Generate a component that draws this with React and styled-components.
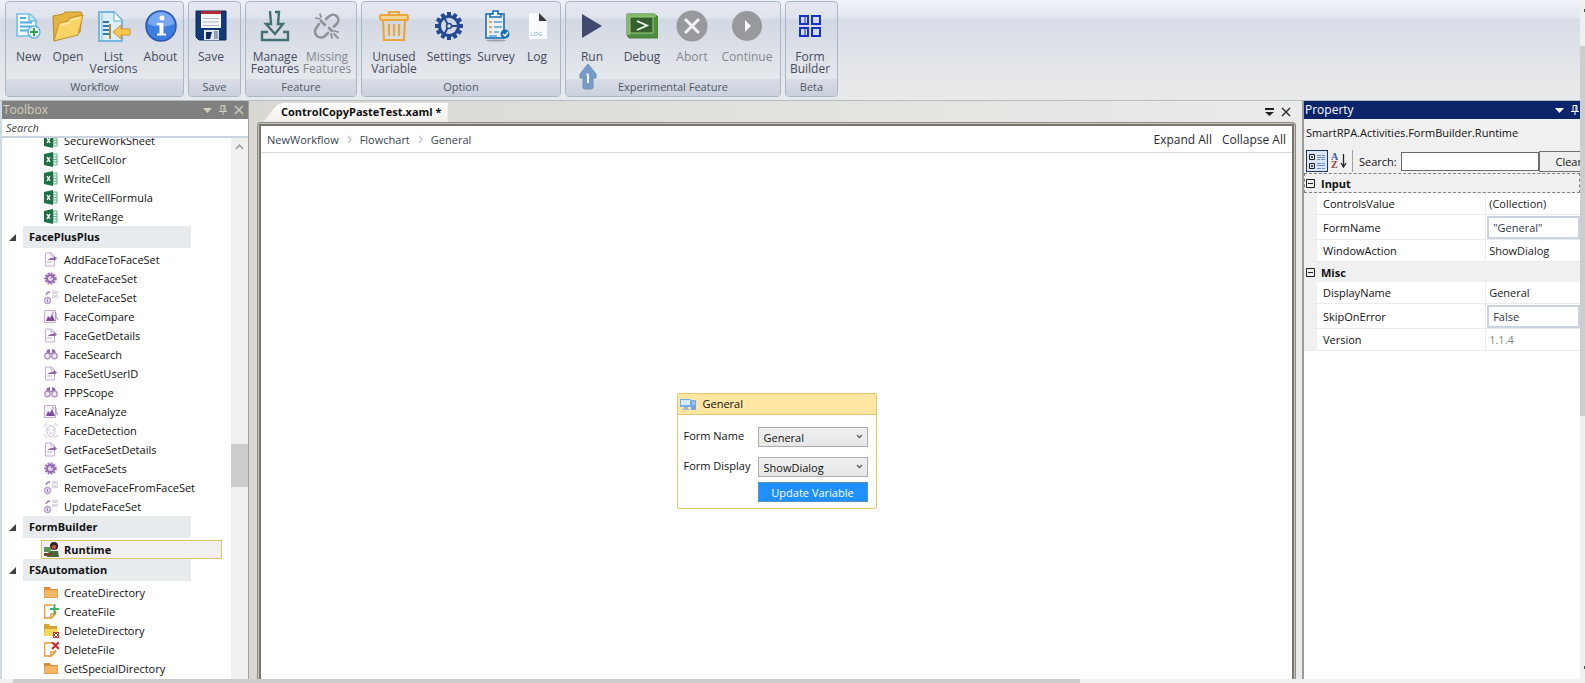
import React from 'react'
import styled, { createGlobalStyle, css } from 'styled-components'

const GlobalStyle = createGlobalStyle`
  * {
    box-sizing: border-box;
  }
  html, body, #root {
    height: 100%;
    margin: 0;
  }
  body, button, input, select {
    font-family: 'Open Sans', 'Noto Sans', sans-serif;
    font-size: 11px;
  }
`

const Window = styled.div`
  height: 100vh;
  display: flex;
  overflow: hidden;
  background: #e4e7ed;
  color: #111;
`

const Desktop = styled.div`
  flex: 1;
  min-width: 0;
  display: flex;
  flex-direction: column;
`

const EdgeTrack = styled.div`
  width: 5px;
  display: flex;
  flex-direction: column;
  align-items: flex-end;
  padding: 9px 0 14px;
  background: #f0f0f0;
`

const EdgeMark = styled.div`
  width: 1px;
  height: 3px;
  background: #505050;
`

const EdgeThumb = styled.div`
  width: 5px;
  height: 370px;
  margin: 34px 0 auto;
  background: #cdcdcd;
`

const BottomTrack = styled.div`
  height: 4px;
  padding: 0 500px 0 13px;
  background: #f0f0f0;
`

const BottomThumb = styled.div`
  height: 4px;
  background: #cdcdcd;
`

/* ribbon */

const Ribbon = styled.header`
  height: 101px;
  flex: none;
  display: flex;
  gap: 4px;
  padding: 1px 5px 3px;
  background: linear-gradient(#f0f3f8 0, #e4e8f0 17%, #d7dce7 19%, #e8e9ea 90%);
  border-bottom: 1px solid #b4bcc6;
`

const Group = styled.section`
  width: ${(p) => p.$w}px;
  display: flex;
  flex-direction: column;
  border: 1px solid #a9b8c8;
  border-radius: 4px;
  overflow: hidden;
  background: linear-gradient(#e6e9f1 0, #dfe3ec 17%, #d2d8e3 19%, #e4e7eb 78%);
`

const GroupTools = styled.div`
  flex: 1;
  display: flex;
  padding: 8px 0 0 4px;
`

const GroupTitle = styled.h2`
  margin: 0;
  height: 17px;
  font-size: 11px;
  font-weight: 400;
  line-height: 15px;
  text-align: center;
  color: #505866;
  background: linear-gradient(#d8dce5, #cbd1dd);
`

const Tool = styled.button`
  position: relative;
  width: ${(p) => p.$w}px;
  flex: none;
  padding: 0;
  border: 0;
  background: none;
  display: flex;
  flex-direction: column;
  align-items: center;
  gap: 9px;
  font-size: 12px;
  line-height: 12px;
  color: #454b5e;

  &:disabled {
    color: #85888f;
  }

  > svg {
    flex: none;
  }
`

const PinArrow = styled.span`
  position: absolute;
  left: 8px;
  top: 53px;
  height: 27px;
`

/* panes */

const Workspace = styled.main`
  flex: 1;
  min-height: 0;
  display: flex;
  background: linear-gradient(90deg, #d6d3cc, #f0f0f0);
`

const Toolbox = styled.aside`
  width: 249px;
  display: flex;
  flex-direction: column;
  border-left: 2px solid #d0d9e4;
  border-right: 1px solid #a0a0a0;
  background: #fff;
`

const PaneTitle = styled.div`
  height: 18px;
  flex: none;
  display: flex;
  align-items: center;
  gap: 7px;
  padding: 0 ${(p) => (p.$active ? 1 : 4)}px 0 1px;
  color: ${(p) => (p.$active ? '#fff' : '#d3cfbb')};
  background: ${(p) => (p.$active ? '#0a246a' : '#808080')};
`

const PaneName = styled.h2`
  flex: 1;
  margin: 0;
  font-size: 12px;
  font-weight: 400;
  line-height: 18px;
`

const IconButton = styled.button`
  padding: 0;
  border: 0;
  background: none;
  color: inherit;
  display: flex;
`

const SearchInput = styled.input`
  height: 19px;
  flex: none;
  border: 0;
  border-bottom: 2px solid #ccd5df;
  padding: 0 4px;
  outline: 0;

  &::placeholder {
    color: #444;
    font-style: italic;
  }
`

const TreeArea = styled.div`
  flex: 1;
  min-height: 0;
  display: flex;
`

const Tree = styled.div`
  flex: 1;
  overflow: hidden;
`

const TreeContent = styled.div`
  margin-top: -7px;
`

const Category = styled.div`
  display: flex;
  align-items: center;
  height: 22px;
  margin-bottom: 2px;
  padding-left: 7px;
  gap: 7px;
`

const CategoryName = styled.h3`
  width: 168px;
  margin: 0;
  padding-left: 6px;
  font-size: 11px;
  line-height: 22px;
  background: #e7ebee;
`

const Item = styled.div`
  display: flex;
  align-items: center;
  gap: 5px;
  height: 19px;
  margin: 0 9px 0 39px;
  padding-left: 2px;
  white-space: nowrap;
  border: 1px solid transparent;

  svg {
    flex: none;
  }

  ${(p) =>
    p.$selected &&
    css`
      font-weight: 700;
      border-color: #dcc56a;
      background: #f1eff0;
    `}
`

const ScrollTrack = styled.div`
  width: 17px;
  flex: none;
  display: flex;
  flex-direction: column;
  align-items: center;
  padding-top: 6px;
  background: #f0f0f0;
`

const ScrollThumb = styled.div`
  width: 17px;
  height: 43px;
  margin-top: 294px;
  background: #cdcdcd;
`

/* document */

const Document = styled.section`
  flex: 1;
  min-width: 0;
  display: flex;
  flex-direction: column;
  margin: 0 6px 0 8px;
`

const TabStrip = styled.div`
  height: 21px;
  display: flex;
  align-items: flex-end;
  padding: 0 5px 0 6px;
`

const Tab = styled.div`
  height: 19px;
  padding: 0 6px 0 18px;
  font-weight: 700;
  line-height: 18px;
  white-space: nowrap;
  background: linear-gradient(#fff, #f1efeb);
  clip-path: polygon(0 100%, 14px 2px, 20px 0, 100% 0, 100% 100%);
`

const TabActions = styled.div`
  margin-left: auto;
  display: flex;
  align-items: center;
  gap: 7px;
  height: 20px;
  color: #222;
`

const Frame = styled.div`
  flex: 1;
  display: flex;
  border: 1px solid #8b8a83;
  border-bottom: 0;
  border-radius: 4px 4px 0 0;
  padding: 1px 1px 0;
  background: #c9c7bf;
`

const Sheet = styled.div`
  flex: 1;
  display: flex;
  flex-direction: column;
  border: 2px solid #77756e;
  border-bottom: 0;
  background: #fff;
`

const Crumbs = styled.nav`
  height: 27px;
  flex: none;
  display: flex;
  align-items: center;
  gap: 7px;
  padding: 0 6px;
  color: #39424e;
  border-bottom: 1px solid #d5dae0;
`

const CrumbLink = styled.a`
  color: inherit;
  text-decoration: none;
`

const CrumbActions = styled.div`
  margin-left: auto;
  display: flex;
  gap: 10px;
`

const TextButton = styled.button`
  padding: 0;
  border: 0;
  background: none;
  font-size: 12px;
  color: #2b2b33;
`

const Canvas = styled.div`
  flex: 1;
  display: flex;
  align-items: center;
  justify-content: center;
`

const Activity = styled.article`
  width: 200px;
  height: 116px;
  margin-top: 70px;
  border: 1px solid #e6c66c;
  border-radius: 2px;
  background: #fff;
`

const ActivityTitle = styled.div`
  height: 21px;
  display: flex;
  align-items: center;
  gap: 6px;
  padding: 0 2px;
  line-height: 18px;
  background: #ffe6a3;
  border-bottom: 1px solid #e6c66c;
`

const ActivityForm = styled.form`
  display: grid;
  grid-template-columns: 74px 110px;
  grid-template-rows: 20px 20px 20px;
  row-gap: 10px;
  padding: 12px 7px 0 6px;
  line-height: 17px;
  white-space: nowrap;
`

const SelectBox = styled.div`
  position: relative;

  svg {
    position: absolute;
    right: 5px;
    top: 7px;
    pointer-events: none;
  }
`

const Select = styled.select`
  appearance: none;
  display: block;
  width: 100%;
  height: 20px;
  padding: 0 5px;
  color: #111;
  border: 1px solid #acacac;
  border-radius: 0;
  background: linear-gradient(#f0f0f0, #e6e6e6);
`

const UpdateButton = styled.button`
  grid-column: 2;
  height: 20px;
  margin-top: -5px;
  padding: 0;
  border: 1px solid #5f8fc0;
  color: #fff;
  background: #1e90ff;
`

/* property grid */

const Property = styled.aside`
  width: 278px;
  display: flex;
  flex-direction: column;
  overflow: hidden;
  border-left: 2px solid #9c9c9c;
  background: #fff;
`

const TypeName = styled.div`
  height: 30px;
  padding: 0 2px;
  line-height: 28px;
  background: #f0f0f0;
`

const PropertyTools = styled.div`
  height: 24px;
  display: flex;
  align-items: center;
  padding-left: 2px;
  white-space: nowrap;
  background: #f0f0f0;

  > * {
    flex: none;
  }
`

const SortButton = styled.button`
  width: 22px;
  height: 22px;
  padding: 0;
  display: flex;
  align-items: center;
  justify-content: center;
  border: 1px solid ${(p) => (p.$on ? '#1d3557' : 'transparent')};
  background: ${(p) => (p.$on ? '#d9e6f7' : 'none')};
`

const Divider = styled.span`
  width: 1px;
  height: 22px;
  margin: 0 6px 0 2px;
  background: #a0a0a0;
`

const PropertySearch = styled.input`
  width: 138px;
  height: 19px;
  margin-left: 4px;
  border: 1px solid #6b6b6b;
`

const ClearButton = styled.button`
  width: 60px;
  height: 21px;
  padding: 0;
  border: 1px solid #707070;
  color: #111;
  background: #eee;
`

const Grid = styled.table`
  width: 100%;
  table-layout: fixed;
  border-collapse: separate;
  border-spacing: 0;
  text-align: left;
  background: #fff;

  th,
  td {
    padding: 0;
    font-weight: 400;
  }
`

const SectionRow = styled.tr`
  height: 20px;
  background: #f0f0f0;
  ${(p) => p.$focused && 'outline: 1px dashed #808080; outline-offset: -1px;'}
`

const SectionHead = styled.div`
  display: flex;
  align-items: center;
  gap: 6px;
  padding-left: 2px;
  font-weight: 700;
  line-height: 19px;
`

const PropertyRow = styled.tr`
  height: ${(p) => (p.$boxed ? 25 : 22)}px;

  th {
    padding-left: 6px;
    border-left: 13px solid #f0f0f0;
    border-right: 1px solid #ececec;
    border-bottom: 1px solid #ececec;
  }

  td {
    padding-left: ${(p) => (p.$boxed ? 1 : 3)}px;
    line-height: 17px;
    border-bottom: 1px solid #ececec;
    color: ${(p) => (p.$muted ? '#858585' : '#222')};
  }
`

const ValueInput = styled.input`
  display: block;
  width: 100%;
  height: 23px;
  padding: 0 4px;
  border: 2px solid #ccd3e0;
  color: #33394f;
`

/* ribbon icons */

const IconNew = () => (
  <svg width="32" height="32" viewBox="0 0 32 32">
    <path d="M4 4h13l6 6v16H4z" fill="#f5fbff" stroke="#72bfe4" strokeWidth="1.6" />
    <path d="M16 4v7h7" fill="#c5e5f6" stroke="#72bfe4" strokeWidth="1.4" />
    <path d="M7 8h6M7 12.500h12M7 16.500h12M7 20.500h8" stroke="#53afe0" strokeWidth="2" />
    <circle cx="21" cy="22" r="6" fill="#eaf7fb" stroke="#5ab3d6" strokeWidth="1.3" />
    <path d="M21 18v8M17 22h8" stroke="#2fa34b" strokeWidth="2" />
  </svg>
)

const IconOpen = () => (
  <svg width="32" height="32" viewBox="0 0 32 32">
    <path d="M1 6l10-2 2-2 16 0 1 2-2 18-26 9z" fill="#e5b440" stroke="#b98a24" />
    <path d="M7 13l9-2 2-3 13-3-5 20L2 31z" fill="#fbd367" stroke="#c1932c" />
    <path d="M9 15l8-2 2-3 9-2" fill="none" stroke="#ffeaa6" strokeWidth="1.5" />
  </svg>
)

const IconVersions = () => (
  <svg width="34" height="32" viewBox="0 0 34 32">
    <path d="M2 2h15l8 8v21H2z" fill="#dceefb" stroke="#58a6dc" strokeWidth="1.5" />
    <path d="M17 2v9h8" fill="#fff" stroke="#58a6dc" />
    <path d="M5 3v27" stroke="#a8d3f1" strokeWidth="2" />
    <path d="M6 12h6M6 16h6M6 20h6M6 24h6" stroke="#2f77b5" strokeWidth="1.8" />
    <path d="M13 14v15" stroke="#c08a1c" strokeWidth="2" />
    <path d="M16 22l8-7v4h9v6h-9v4z" fill="#fbc44d" stroke="#cb942e" />
  </svg>
)

const IconAbout = () => (
  <svg width="32" height="32" viewBox="0 0 32 32">
    <circle cx="16" cy="16" r="15" fill="#3e7de0" stroke="#2a57ac" strokeWidth="1.5" />
    <path d="M3 14a13 12 0 0 1 26 0q-13 6-26 0z" fill="#77a8f3" />
    <circle cx="17" cy="8" r="2.500" fill="#fff" />
    <path d="M12 13h6.500v10.500H21v2h-9v-2h2.500v-8.500H12z" fill="#fff" />
  </svg>
)

const IconSave = () => (
  <svg width="32" height="32" viewBox="0 0 32 32">
    <path d="M1 1h30v29H4l-3-3z" fill="#123a78" stroke="#0b2650" />
    <path d="M6 1h20v4H6z" fill="#b02a34" />
    <path d="M6 4h20v14H6z" fill="#f5f5f7" />
    <path d="M8 8.500h16M8 12h16M8 15.500h16" stroke="#b5b9c4" />
    <path d="M9 20h15v10H9z" fill="#dfe6ef" />
    <path d="M11 22h6l-2 7h-4z" fill="#122a52" />
    <path d="M19 21h4v8h-4z" fill="#92a1b8" />
  </svg>
)

const IconManage = () => (
  <svg width="32" height="32" viewBox="0 0 32 32" fill="none" stroke="#3f7175" strokeWidth="2.400">
    <path d="M11 1l1 13H7l9 10 8-10h-5l1-12h-4" />
    <path d="M9 22H3v8h26v-8h-5" />
  </svg>
)

const IconMissing = () => (
  <svg width="32" height="32" viewBox="0 0 32 32" fill="none" stroke="#8e9197" strokeWidth="2.600" strokeLinecap="round">
    <path d="M15 9l3-2.500a5 5 0 0 1 8 7l-3 3" />
    <path d="M8 14l-2 3a5.500 5.500 0 0 0 8 9l3-3" />
    <path d="M10 11l4 4M18 18l3 3" />
    <path d="M5 8l4 1M9 4l1 3M23 21l4 1M20 24l1 4M23 24l4 4" strokeWidth="1.800" />
  </svg>
)

const IconTrash = () => (
  <svg width="32" height="32" viewBox="0 0 32 32" fill="none" stroke="#eaa63a" strokeWidth="2.200">
    <rect x="2" y="5" width="28" height="5" rx="2" fill="#f4d69a" />
    <path d="M11 5V2h10v3M5 10l1 20h20l1-20" />
    <path d="M11 14v12M16 14v12M21 14v12" />
  </svg>
)

const teeth = [0, 30, 60, 90, 120, 150, 180, 210, 240, 270, 300, 330]

const IconSettings = () => (
  <svg width="32" height="32" viewBox="0 0 32 32" stroke="#234a92" fill="none">
    {teeth.map((a) => (
      <path key={a} d="M16 2v5" strokeWidth="4" transform={`rotate(${a} 16 16)`} />
    ))}
    <circle cx="16" cy="16" r="9.500" strokeWidth="3" />
    <circle cx="16" cy="16" r="2.500" strokeWidth="1.500" fill="#dfe3ec" />
    <path d="M19 16h6M14.500 14l-3-6M14.500 18l-3 6" strokeWidth="2" />
  </svg>
)

const IconSurvey = () => (
  <svg width="32" height="32" viewBox="0 0 32 32">
    <ellipse cx="16" cy="30.500" rx="10" ry="1" fill="#9aa1ad" />
    <rect x="6" y="4" width="18" height="24" fill="#e8f1fa" stroke="#186fb4" strokeWidth="1.600" />
    <path d="M10 4h3V1h5v3h3v3H10z" fill="#fff" stroke="#186fb4" strokeWidth="1.600" />
    <path d="M9 12h3M9 17h3M9 22h3" stroke="#efa24c" strokeWidth="2" />
    <path d="M14 12h8M14 17h8M14 22h5M9 26h8" stroke="#58a0d5" strokeWidth="1.600" />
    <circle cx="25" cy="24" r="4.500" fill="#186fb4" />
    <path d="M23 24l2 2 3-4" fill="none" stroke="#fff" strokeWidth="1.400" />
  </svg>
)

const IconLog = () => (
  <svg width="32" height="32" viewBox="0 0 32 32">
    <path d="M8 3h10l8 8v18H8z" fill="#f8fafc" />
    <path d="M18 3l8 8h-8z" fill="#3a3a3e" />
    <text x="9" y="26" fontSize="6" fill="#6cb0dd" fontFamily="Open Sans">LOG</text>
  </svg>
)

const IconRun = () => (
  <svg width="32" height="32" viewBox="0 0 32 32">
    <path d="M6 4l20 12L6 28z" fill="#3f4a6e" />
  </svg>
)

const IconDebug = () => (
  <svg width="32" height="32" viewBox="0 0 32 32">
    <path d="M1 4h28l3 3v21H3l-2-3z" fill="#4f8d3f" stroke="#4a7b3d" />
    <path d="M1 4h29v3H4v18H1z" fill="#7fb964" />
    <path d="M4 7h23v16H4z" fill="#35602f" stroke="#9bcf80" strokeWidth="1" />
    <path d="M11 11l10 4.500L11 20" fill="none" stroke="#f3fff0" strokeWidth="1.800" />
  </svg>
)

const IconAbort = () => (
  <svg width="32" height="32" viewBox="0 0 32 32">
    <circle cx="16" cy="16" r="15.500" fill="#97999d" />
    <path d="M9 9l14 14M23 9L9 23" stroke="#f2f2f4" strokeWidth="3" />
  </svg>
)

const IconContinue = () => (
  <svg width="32" height="32" viewBox="0 0 32 32">
    <circle cx="16" cy="16" r="15" fill="#97999d" />
    <path d="M14 10l6 6-6 6z" fill="#f7f7f9" />
  </svg>
)

const IconForm = () => (
  <svg width="32" height="32" viewBox="0 0 32 32" fill="none" stroke="#1733cf" strokeWidth="2">
    <path d="M6 6h8v8H6zM18 6h8v8h-8zM6 18h8v8H6zM18 18h8v8h-8z" />
    <path d="M11 7v6M11 19v6" strokeWidth="1" />
  </svg>
)

const Arrow = () => (
  <svg width="20" height="27" viewBox="0 0 20 27">
    <path d="M10 1l8 10v4h-3v9q0 2-2 2H7q-2 0-2-2v-9H2v-4z" fill="#779bc9" stroke="#6c8fbc" />
    <path d="M8.500 11.500h1.500V20" fill="none" stroke="#eef4fb" strokeWidth="2" />
  </svg>
)

/* small icons */

const Caret = () => (
  <svg width="9" height="5" viewBox="0 0 9 5">
    <path d="M0 0h9L4.500 5z" fill="currentColor" />
  </svg>
)

const Pin = () => (
  <svg width="8" height="10" viewBox="0 0 8 10" fill="none" stroke="currentColor">
    <path d="M2 6V.5h4V6M5 1v5M0 6.500h8M4 7v3" />
  </svg>
)

const Close = () => (
  <svg width="10" height="10" viewBox="0 0 10 10" stroke="currentColor" strokeWidth="1.300">
    <path d="M1 1l8 8M9 1L1 9" />
  </svg>
)

const TabMenu = () => (
  <svg width="9" height="8" viewBox="0 0 9 8" fill="currentColor">
    <path d="M0 0h9v2H0zM0 4h9L4.500 8z" />
  </svg>
)

const ScrollUp = () => (
  <svg width="9" height="6" viewBox="0 0 9 6" fill="none" stroke="#9a9a9a" strokeWidth="1.400">
    <path d="M1 5l3.500-4L8 5" />
  </svg>
)

const CrumbArrow = () => (
  <svg width="7" height="9" viewBox="0 0 7 9" fill="none" stroke="#c9ced5" strokeWidth="1.600">
    <path d="M2 1l3 3.500L2 8" />
  </svg>
)

const SelectArrow = () => (
  <svg width="7" height="5" viewBox="0 0 7 5" fill="none" stroke="#606060" strokeWidth="1.400">
    <path d="M1 1l2.500 2.500L6 1" />
  </svg>
)

const Expanded = () => (
  <svg width="7" height="7" viewBox="0 0 7 7">
    <path d="M7 0v7H0z" fill="#404040" />
  </svg>
)

const Computer = () => (
  <svg width="17" height="14" viewBox="0 0 17 14">
    <path d="M0 2h11v8H0z" fill="#74aef0" />
    <path d="M1 3h9v5H1z" fill="#d5ebff" />
    <path d="M4 10h4v2h2v1H2v-1h2z" fill="#9fb4cf" />
    <rect x="11" y="3" width="5" height="10" rx="1" fill="#6fa3ea" />
    <path d="M12 5h3M12 7h3" stroke="#c6dcfa" />
  </svg>
)

const Minus = () => (
  <svg width="9" height="9" viewBox="0 0 9 9" fill="none" stroke="#222">
    <path d="M.5.5h8v8h-8zM2 4.500h5" />
  </svg>
)

const Categorized = () => (
  <svg width="17" height="17" viewBox="0 0 17 17" fill="none" stroke="#222">
    <path d="M.5 1.500h5v5h-5zM2 4h2M3 3v2M.5 10.500h5v5h-5zM2 13h2M3 12v2" />
    <path d="M8 2.500h4M8 6.500h3M12 6.500h4M13 2.500h3M8 4.500h8M8 10.500h4M13 10.500h3M8 12.500h8M8 15.500h4M13 15.500h3" stroke="#7390c8" />
  </svg>
)

const SortAz = () => (
  <svg width="18" height="20" viewBox="0 0 18 20">
    <text x="1" y="9" fontSize="10" fontWeight="700" fill="#3a5ba8" fontFamily="Liberation Serif">A</text>
    <text x="1" y="17" fontSize="10" fontWeight="700" fill="#a83a3a" fontFamily="Liberation Serif">Z</text>
    <path d="M13.500 3v12M11 12l2.500 4 2.500-4" fill="none" stroke="#222" strokeWidth="1.300" />
  </svg>
)

/* toolbox icons */

const glyphs = {
  excel: (
    <>
      <path d="M9 2h4v11H9z" fill="#e8f3ec" stroke="#6fae88" />
      <path d="M9 5h4M9 7.500h4M9 10h4" stroke="#6fae88" />
      <path d="M0 2l9-2v15l-9-2z" fill="#1d7044" />
      <path d="M3 5l3 5M6 5l-3 5" stroke="#fff" strokeWidth="1.400" />
    </>
  ),
  doc: (
    <>
      <path d="M1.500 1h6l3 3v10h-9z" fill="#fbf8fd" stroke="#c3afd2" />
      <path d="M7 1v3h3M3 10h5" fill="none" stroke="#c3afd2" />
      <path d="M4 7.500q3-2 6-2V4l3 2.500L10 9V8H4z" fill="#9164ad" />
    </>
  ),
  gear: (
    <>
      <circle cx="6.500" cy="7.500" r="5.200" fill="none" stroke="#9c74b5" strokeWidth="2" strokeDasharray="2 1" />
      <circle cx="6.500" cy="7.500" r="3.500" fill="#e3d4ec" stroke="#9467af" strokeWidth="2" />
      <path d="M7 7l3-3" stroke="#8d5fa9" strokeWidth="1.500" />
    </>
  ),
  remove: (
    <>
      <circle cx="3.500" cy="10.500" r="3" fill="#f2eaf7" stroke="#b79bc9" strokeWidth="1.300" />
      <path d="M3.500 9v3M2 5q1-3 4-3" fill="none" stroke="#a07fb8" strokeWidth="1.300" />
      <path d="M8.500 1.500h2v2h-2zM11.500 1.500h2v2h-2zM8.500 5.500h2v2h-2zM11.500 5.500h2v2h-2z" fill="none" stroke="#d9cbe2" />
    </>
  ),
  picture: (
    <>
      <path d="M.5 1.500h11v12H.5z" fill="#f7f2fa" stroke="#c3afd2" />
      <path d="M2 12l2-5 2 2 2-4 3 7z" fill="#7d4b9c" />
      <path d="M9 2.500v3M11 3l1 1v4l2 3" fill="none" stroke="#a381b8" />
    </>
  ),
  binoculars: (
    <>
      <path d="M3 3l3-1v4h2V2l3 1 1 4H2z" fill="#9467af" />
      <circle cx="3.500" cy="9" r="2.700" fill="#f4ecf8" stroke="#b193c4" strokeWidth="1.400" />
      <circle cx="10.500" cy="9" r="2.700" fill="#f4ecf8" stroke="#b193c4" strokeWidth="1.400" />
    </>
  ),
  face: (
    <g fill="none" stroke="#d0c0dc">
      <path d="M1 4V1h3M10 1h3v3M1 11v3h3M10 14h3v-3" strokeDasharray="2 1" />
      <path d="M3 5q4-5 8 0v4q-1 5-4 5t-4-5zM3 7h3M8 7h3M5 10h4" />
    </g>
  ),
  runtime: (
    <>
      <circle cx="10" cy="4" r="4" fill="#2b2424" />
      <circle cx="10" cy="5" r="2.200" fill="#d9483a" />
      <path d="M5 9h9l1 6H3z" fill="#3d6b3a" />
      <path d="M0 5h7v5H0z" fill="#5e9454" />
      <path d="M0 11h9v3H0z" fill="#6d4a35" />
    </>
  ),
  folder: (
    <>
      <path d="M0 2h6l1 2h7v9H0z" fill="#d98b33" />
      <path d="M.5 5h13v7.500H.5z" fill="#f3b866" stroke="#e6a050" />
    </>
  ),
  fileAdd: (
    <>
      <path d="M.5 1h8M.5 1v13h7l4-4V7M7 14v-4h4" fill="none" stroke="#e79a38" strokeWidth="1.500" />
      <path d="M10.500 0v10M6 5h9" stroke="#35b36b" strokeWidth="2" />
    </>
  ),
  folderDelete: (
    <>
      <path d="M0 1h5l1 2h7v10H0z" fill="#d6a62e" />
      <path d="M1 6h13l-1 7H0z" fill="#f8d75e" />
      <path d="M9 9h6v6H9z" fill="#c83a35" />
      <path d="M10 10l4 4M14 10l-4 4" stroke="#fff" />
    </>
  ),
  fileDelete: (
    <>
      <path d="M.5 1h8M.5 1v13h7l4-4V8M7 14v-4h4" fill="none" stroke="#e79a38" strokeWidth="1.500" />
      <path d="M8 0l7 7M15 0L8 7" stroke="#d8202a" strokeWidth="2" />
    </>
  ),
}

const Glyph = ({ name }) => (
  <svg width="15" height="15" viewBox="0 0 15 15">
    {glyphs[name]}
  </svg>
)

const groups = [
  {
    title: 'Workflow',
    width: 179,
    tools: [
      { label: 'New', icon: IconNew, width: 37 },
      { label: 'Open', icon: IconOpen, width: 42 },
      { label: 'List Versions', icon: IconVersions, width: 49 },
      { label: 'About', icon: IconAbout, width: 45 },
    ],
  },
  { title: 'Save', width: 53, tools: [{ label: 'Save', icon: IconSave, width: 36 }] },
  {
    title: 'Feature',
    width: 112,
    tools: [
      { label: 'Manage Features', icon: IconManage, width: 50 },
      { label: 'Missing Features', icon: IconMissing, width: 54, disabled: true },
    ],
  },
  {
    title: 'Option',
    width: 200,
    tools: [
      { label: 'Unused Variable', icon: IconTrash, width: 56 },
      { label: 'Settings', icon: IconSettings, width: 54 },
      { label: 'Survey', icon: IconSurvey, width: 40 },
      { label: 'Log', icon: IconLog, width: 42 },
    ],
  },
  {
    title: 'Experimental Feature',
    width: 216,
    tools: [
      { label: 'Run', icon: IconRun, width: 44, arrow: true },
      { label: 'Debug', icon: IconDebug, width: 56 },
      { label: 'Abort', icon: IconAbort, width: 44, disabled: true },
      { label: 'Continue', icon: IconContinue, width: 66, disabled: true },
    ],
  },
  { title: 'Beta', width: 53, tools: [{ label: 'Form Builder', icon: IconForm, width: 40 }] },
]

const toolbox = [
  {
    items: [
      ['SecureWorkSheet', 'excel'],
      ['SetCellColor', 'excel'],
      ['WriteCell', 'excel'],
      ['WriteCellFormula', 'excel'],
      ['WriteRange', 'excel'],
    ],
  },
  {
    name: 'FacePlusPlus',
    items: [
      ['AddFaceToFaceSet', 'doc'],
      ['CreateFaceSet', 'gear'],
      ['DeleteFaceSet', 'remove'],
      ['FaceCompare', 'picture'],
      ['FaceGetDetails', 'doc'],
      ['FaceSearch', 'binoculars'],
      ['FaceSetUserID', 'doc'],
      ['FPPScope', 'binoculars'],
      ['FaceAnalyze', 'picture'],
      ['FaceDetection', 'face'],
      ['GetFaceSetDetails', 'doc'],
      ['GetFaceSets', 'gear'],
      ['RemoveFaceFromFaceSet', 'remove'],
      ['UpdateFaceSet', 'remove'],
    ],
  },
  { name: 'FormBuilder', items: [['Runtime', 'runtime']] },
  {
    name: 'FSAutomation',
    items: [
      ['CreateDirectory', 'folder'],
      ['CreateFile', 'fileAdd'],
      ['DeleteDirectory', 'folderDelete'],
      ['DeleteFile', 'fileDelete'],
      ['GetSpecialDirectory', 'folder'],
    ],
  },
]

const sections = [
  {
    name: 'Input',
    focused: true,
    rows: [
      { name: 'ControlsValue', value: '(Collection)' },
      { name: 'FormName', value: '"General"', boxed: true },
      { name: 'WindowAction', value: 'ShowDialog' },
    ],
  },
  {
    name: 'Misc',
    rows: [
      { name: 'DisplayName', value: 'General' },
      { name: 'SkipOnError', value: 'False', boxed: true },
      { name: 'Version', value: '1.1.4', muted: true },
    ],
  },
]

const App = () => (
  <>
    <GlobalStyle />
    <Window>
      <Desktop>
        <Ribbon>
          {groups.map((g) => (
            <Group key={g.title} $w={g.width}>
              <GroupTools>
                {g.tools.map(({ label, icon: Icon, width, disabled, arrow }) => (
                  <Tool key={label} $w={width} disabled={disabled}>
                    <Icon />
                    {label}
                    {arrow && (
                      <PinArrow>
                        <Arrow />
                      </PinArrow>
                    )}
                  </Tool>
                ))}
              </GroupTools>
              <GroupTitle>{g.title}</GroupTitle>
            </Group>
          ))}
        </Ribbon>
        <Workspace>
          <Toolbox>
            <PaneTitle>
              <PaneName>Toolbox</PaneName>
              <IconButton aria-label="Menu">
                <Caret />
              </IconButton>
              <IconButton aria-label="Pin">
                <Pin />
              </IconButton>
              <IconButton aria-label="Close">
                <Close />
              </IconButton>
            </PaneTitle>
            <SearchInput placeholder="Search" aria-label="Search toolbox" />
            <TreeArea>
              <Tree>
                <TreeContent>
                  {toolbox.map((category) => (
                    <React.Fragment key={category.name || 'top'}>
                      {category.name && (
                        <Category>
                          <Expanded />
                          <CategoryName>{category.name}</CategoryName>
                        </Category>
                      )}
                      {category.items.map(([name, icon]) => (
                        <Item key={name} $selected={name === 'Runtime'}>
                          <Glyph name={icon} />
                          {name}
                        </Item>
                      ))}
                    </React.Fragment>
                  ))}
                </TreeContent>
              </Tree>
              <ScrollTrack>
                <ScrollUp />
                <ScrollThumb />
              </ScrollTrack>
            </TreeArea>
          </Toolbox>
          <Document>
            <TabStrip>
              <Tab>ControlCopyPasteTest.xaml *</Tab>
              <TabActions>
                <IconButton aria-label="Documents">
                  <TabMenu />
                </IconButton>
                <IconButton aria-label="Close document">
                  <Close />
                </IconButton>
              </TabActions>
            </TabStrip>
            <Frame>
              <Sheet>
                <Crumbs>
                  <CrumbLink href="#workflow">NewWorkflow</CrumbLink>
                  <CrumbArrow />
                  <CrumbLink href="#flowchart">Flowchart</CrumbLink>
                  <CrumbArrow />
                  <CrumbLink href="#general">General</CrumbLink>
                  <CrumbActions>
                    <TextButton>Expand All</TextButton>
                    <TextButton>Collapse All</TextButton>
                  </CrumbActions>
                </Crumbs>
                <Canvas>
                  <Activity>
                    <ActivityTitle>
                      <Computer />
                      General
                    </ActivityTitle>
                    <ActivityForm>
                      <label htmlFor="form-name">Form Name</label>
                      <SelectBox>
                        <Select id="form-name">
                          <option>General</option>
                        </Select>
                        <SelectArrow />
                      </SelectBox>
                      <label htmlFor="form-display">Form Display</label>
                      <SelectBox>
                        <Select id="form-display">
                          <option>ShowDialog</option>
                        </Select>
                        <SelectArrow />
                      </SelectBox>
                      <UpdateButton type="button">Update Variable</UpdateButton>
                    </ActivityForm>
                  </Activity>
                </Canvas>
              </Sheet>
            </Frame>
          </Document>
          <Property>
            <PaneTitle $active>
              <PaneName>Property</PaneName>
              <IconButton aria-label="Menu">
                <Caret />
              </IconButton>
              <IconButton aria-label="Pin">
                <Pin />
              </IconButton>
            </PaneTitle>
            <TypeName>SmartRPA.Activities.FormBuilder.Runtime</TypeName>
            <PropertyTools>
              <SortButton $on aria-label="Categorized">
                <Categorized />
              </SortButton>
              <SortButton aria-label="Alphabetical">
                <SortAz />
              </SortButton>
              <Divider />
              <label htmlFor="property-search">Search:</label>
              <PropertySearch id="property-search" />
              <ClearButton>Clear</ClearButton>
            </PropertyTools>
            <Grid>
              <colgroup>
                <col style={{ width: '66%' }} />
                <col />
              </colgroup>
              <tbody>
                {sections.map((s) => (
                  <React.Fragment key={s.name}>
                    <SectionRow $focused={s.focused}>
                      <th colSpan={2}>
                        <SectionHead>
                          <Minus />
                          {s.name}
                        </SectionHead>
                      </th>
                    </SectionRow>
                    {s.rows.map((r) => (
                      <PropertyRow key={r.name} $boxed={r.boxed} $muted={r.muted}>
                        <th scope="row">{r.name}</th>
                        <td>
                          {r.boxed ? (
                            <ValueInput defaultValue={r.value} aria-label={r.name} />
                          ) : (
                            r.value
                          )}
                        </td>
                      </PropertyRow>
                    ))}
                  </React.Fragment>
                ))}
              </tbody>
            </Grid>
          </Property>
        </Workspace>
        <BottomTrack>
          <BottomThumb />
        </BottomTrack>
      </Desktop>
      <EdgeTrack>
        <EdgeMark />
        <EdgeThumb />
        <EdgeMark />
      </EdgeTrack>
    </Window>
  </>
)

export default App
